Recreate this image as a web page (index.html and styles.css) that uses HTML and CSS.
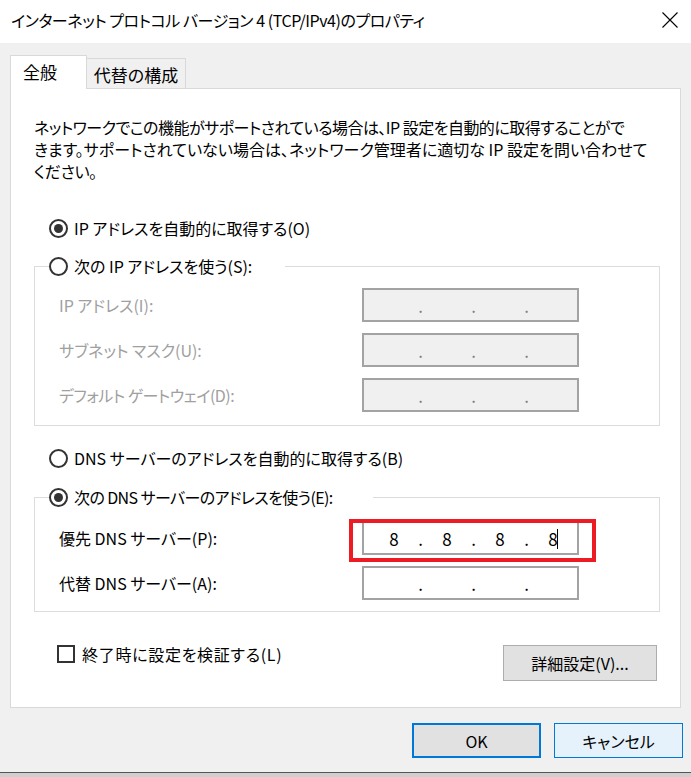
FILE: index.html
```html
<!DOCTYPE html>
<html lang="ja">
<head>
<meta charset="utf-8">
<title>インターネット プロトコル バージョン 4 (TCP/IPv4)のプロパティ</title>
<link rel="stylesheet" href="styles.css">
</head>
<body>
<div class="window">
  <header class="titlebar">
    <span class="title">インターネット プロトコル バージョン 4 (TCP/IPv4)のプロパティ</span>
    <svg class="close" width="16" height="16" viewBox="0 0 16 16"><path d="M0.5 0.5 L15.5 15.5 M15.5 0.5 L0.5 15.5" stroke="#000" stroke-width="1.1" fill="none"/></svg>
  </header>
  <div class="client">
    <div class="tabs">
      <div class="tab active">全般</div>
      <div class="tab">代替の構成</div>
    </div>
    <div class="panel">
      <p class="intro"><span class="l1">ネットワークでこの機能がサポートされている場合は、IP 設定を自動的に取得することがで</span><br><span class="l2">きます。サポートされていない場合は、ネットワーク管理者に適切な IP 設定を問い合わせて</span><br><span>ください。</span></p>

      <div class="option first"><span class="radio checked"></span><span>IP アドレスを自動的に取得する(O)</span></div>

      <fieldset class="group g-ip">
        <legend class="legend-ip"><span class="legend-inner"><span class="radio"></span><span>次の IP アドレスを使う(S):</span></span></legend>
        <div class="field">
          <span class="lbl muted">IP アドレス(I):</span>
          <div class="ip disabled"><span class="oct"></span><span class="dot">.</span><span class="oct"></span><span class="dot">.</span><span class="oct"></span><span class="dot">.</span><span class="oct"></span></div>
        </div>
        <div class="field">
          <span class="lbl muted">サブネット マスク(U):</span>
          <div class="ip disabled"><span class="oct"></span><span class="dot">.</span><span class="oct"></span><span class="dot">.</span><span class="oct"></span><span class="dot">.</span><span class="oct"></span></div>
        </div>
        <div class="field">
          <span class="lbl muted narrow">デフォルト ゲートウェイ(D):</span>
          <div class="ip disabled"><span class="oct"></span><span class="dot">.</span><span class="oct"></span><span class="dot">.</span><span class="oct"></span><span class="dot">.</span><span class="oct"></span></div>
        </div>
      </fieldset>

      <div class="option dns-auto"><span class="radio"></span><span>DNS サーバーのアドレスを自動的に取得する(B)</span></div>

      <fieldset class="group g-dns">
        <legend class="legend-dns"><span class="legend-inner"><span class="radio checked"></span><span class="legend-text-dns">次の DNS サーバーのアドレスを使う(E):</span></span></legend>
        <div class="field dns1">
          <span class="lbl">優先 DNS サーバー(P):</span>
          <div class="ip highlighted"><span class="oct">8</span><span class="dot">.</span><span class="oct">8</span><span class="dot">.</span><span class="oct">8</span><span class="dot">.</span><span class="oct last">8<span class="caret"></span></span></div>
        </div>
        <div class="field">
          <span class="lbl">代替 DNS サーバー(A):</span>
          <div class="ip"><span class="oct"></span><span class="dot">.</span><span class="oct"></span><span class="dot">.</span><span class="oct"></span><span class="dot">.</span><span class="oct"></span></div>
        </div>
      </fieldset>

      <div class="bottom-row">
        <div class="check"><span class="box"></span><span class="check-text">終了時に設定を検証する(L)</span></div>
        <button class="btn adv">詳細設定(V)...</button>
      </div>
    </div>
    <div class="actions">
      <button class="btn ok">OK</button>
      <button class="btn cancel">キャンセル</button>
    </div>
  </div>
  <div class="frame-bottom"></div>
</div>
</body>
</html>
```
FILE: styles.css
```css
*, *::before, *::after { box-sizing: border-box; }

html, body {
  margin: 0;
  padding: 0;
}

body {
  width: 691px;
  height: 777px;
  overflow: hidden;
  font-family: "Noto Sans CJK JP", "Noto Sans", sans-serif;
  font-feature-settings: "palt";
  font-size: 16px;
  color: #000;
  background: #f0f0f0;
}

.window {
  display: flex;
  flex-direction: column;
  height: 777px;
}

.titlebar {
  height: 43px;
  background: #fff;
  display: flex;
  align-items: center;
  justify-content: space-between;
  padding: 0 13px 4px 11px;
  flex: none;
}

.title {
  font-size: 16px;
  line-height: 24px;
  letter-spacing: -0.45px;
  white-space: nowrap;
}

.close { display: block; }

.client {
  flex: none;
  height: 729px;
  background: #f0f0f0;
  padding: 12px 10px 0 10px;
  display: flex;
  flex-direction: column;
}

.tabs {
  display: flex;
  align-items: flex-end;
  height: 33px;
  position: relative;
  z-index: 1;
}

.tab {
  height: 30px;
  width: 99px;
  border: 1px solid #d9d9d9;
  border-left: none;
  border-bottom: none;
  background: #f0f0f0;
  display: flex;
  align-items: center;
  justify-content: center;
  padding-top: 1px;
  font-size: 17px;
  white-space: nowrap;
}

.tab.active {
  height: 34px;
  width: 77px;
  margin-bottom: -1px;
  border-left: 1px solid #d9d9d9;
  background: #fff;
  justify-content: flex-start;
  padding-left: 12px;
  padding-top: 0;
  padding-bottom: 2px;
}

.panel {
  height: 620px;
  background: #fff;
  border: 1px solid #d9d9d9;
  padding: 0 20px 0 23px;
  display: flex;
  flex-direction: column;
}

.intro {
  margin: 27px 0 0 0;
  line-height: 22px;
  white-space: nowrap;
  letter-spacing: -0.35px;
}

.intro .l1 { letter-spacing: -0.52px; }
.intro .l2 { letter-spacing: 0.02px; }

.option {
  display: flex;
  align-items: center;
  height: 24px;
  padding-left: 15px;
  white-space: nowrap;
}

.option.first { margin-top: 34px; }
.option.dns-auto { margin-top: 20px; }

.radio {
  width: 19px;
  height: 19px;
  border: 2px solid #333;
  border-radius: 50%;
  margin-right: 6px;
  flex: none;
  display: flex;
  align-items: center;
  justify-content: center;
  background: #fff;
}

.radio.checked::after {
  content: "";
  width: 9px;
  height: 9px;
  border-radius: 50%;
  background: #333;
}

.group {
  margin: 14px 0 0 0;
  padding: 0 0 13px 0;
  border: 1px solid #dcdcdc;
  min-width: 0;
}

.g-dns {
  margin-top: 15px;
  padding-bottom: 11px;
}

.group legend {
  padding: 0;
  margin-left: 14px;
  height: 24px;
}

.legend-ip { padding-right: 33px !important; }
.legend-dns { padding-right: 40px !important; }

.legend-text-dns { letter-spacing: -0.6px; }

.legend-inner {
  display: flex;
  align-items: center;
  height: 24px;
  white-space: nowrap;
}

.field {
  display: flex;
  align-items: center;
  height: 34px;
  margin-top: 11px;
}

.field:first-of-type { margin-top: 10px; }
.g-dns .field:first-of-type { margin-top: 12px; }

.lbl {
  width: 327px;
  padding-left: 24px;
  white-space: nowrap;
  flex: none;
}

.lbl.narrow { letter-spacing: -0.5px; }

.lbl.muted { color: #a0a0a0; }

.ip {
  width: 217px;
  height: 34px;
  border: 2px solid #a3a3a3;
  background: #fff;
  display: flex;
  align-items: center;
  padding-left: 18px;
  font-size: 17px;
  position: relative;
}

.ip.disabled { background: #f0f0f0; }

.ip.disabled .dot { color: #808080; }

.oct {
  width: 24px;
  text-align: center;
  position: relative;
}

.dot {
  width: 29px;
  text-align: center;
}

.caret {
  position: absolute;
  left: 16px;
  top: 3px;
  width: 1px;
  height: 20px;
  background: #000;
}

.highlighted::after {
  content: "";
  position: absolute;
  left: -15px;
  top: -4px;
  width: 247px;
  height: 43px;
  border: 4px solid #ed1c24;
}

.bottom-row {
  margin-top: 33px;
  display: flex;
  align-items: center;
  justify-content: space-between;
  padding-left: 23px;
  padding-right: 3px;
  height: 36px;
}

.check {
  display: flex;
  align-items: center;
  white-space: nowrap;
  margin-top: -18px;
}

.check-text { letter-spacing: 0.7px; }

.box {
  width: 18px;
  height: 18px;
  border: 2px solid #333;
  margin-right: 7px;
  flex: none;
}

.btn {
  font-family: inherit;
  font-feature-settings: "palt";
  font-size: 16px;
  color: #000;
  background: #e1e1e1;
  border: 1px solid #adadad;
  padding: 0;
  margin: 0;
}

.adv {
  width: 154px;
  height: 36px;
}

.actions {
  margin-top: 15px;
  display: flex;
  justify-content: flex-end;
  gap: 13px;
  margin-right: -2px;
}

.ok, .cancel {
  width: 129px;
  height: 35px;
}

.ok {
  background: #e1e1e1;
  border: 2px solid #0078d7;
}

.cancel {
  background: #e5f1fb;
  border: 1px solid #0078d7;
}

.frame-bottom {
  flex: 1;
  border-top: 1px solid #555;
  background: #cfcfcf;
}
```
